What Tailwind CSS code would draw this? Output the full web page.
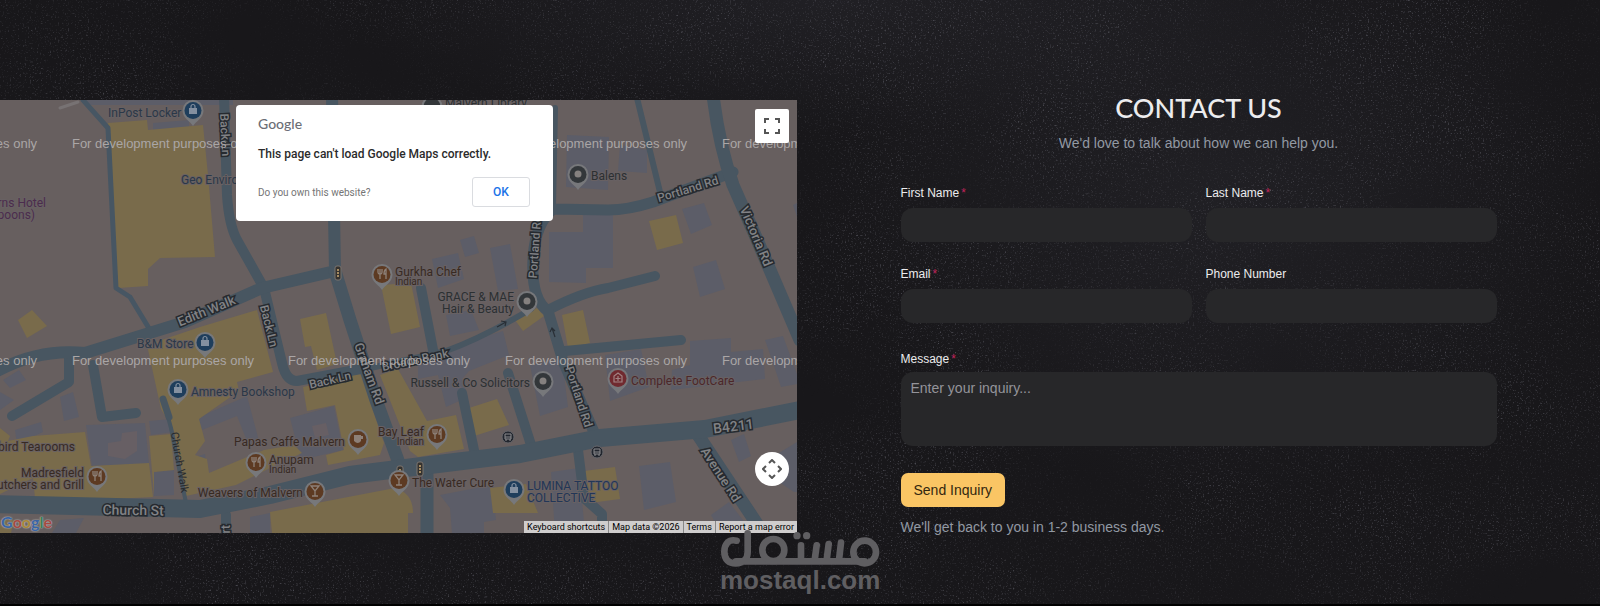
<!DOCTYPE html>
<html lang="en">
<head>
<meta charset="utf-8">
<meta name="viewport" content="width=device-width, initial-scale=1">
<title>Contact us</title>
<script src="https://cdn.jsdelivr.net/npm/@tailwindcss/browser@4"></script>
</head>
<body class="bg-black font-['Liberation_Sans',Arial,sans-serif]">
<main class="relative isolate min-h-[604px] overflow-hidden bg-[#18171a] pt-[100px] pb-[68px]">

  <!-- Chalkboard texture -->
  <svg class="absolute inset-0 -z-10 h-full w-full" aria-hidden="true">
    <defs>
      <filter id="dust" x="0" y="0" width="100%" height="100%" color-interpolation-filters="sRGB">
        <feTurbulence type="fractalNoise" baseFrequency="0.6" numOctaves="2" seed="4" result="n"/>
        <feColorMatrix in="n" type="matrix" values="0 0 0 0 0.55  0 0 0 0 0.55  0 0 0 0 0.6  1.5 0 0 0 -0.88" result="grain"/>
        <feTurbulence type="fractalNoise" baseFrequency="0.006 0.009" numOctaves="4" seed="23" result="c"/>
        <feColorMatrix in="c" type="matrix" values="0 0 0 0 1  0 0 0 0 1  0 0 0 0 1  2 0 0 0 -0.4" result="cloud"/>
        <feComposite in="grain" in2="cloud" operator="in"/>
      </filter>
      <radialGradient id="haze"><stop offset="0" stop-color="#34343c" stop-opacity=".3"/><stop offset="1" stop-color="#34343c" stop-opacity="0"/></radialGradient>
    </defs>
    <ellipse cx="52%" cy="0" rx="30%" ry="22%" fill="url(#haze)"/>
    <ellipse cx="76%" cy="32%" rx="24%" ry="50%" fill="url(#haze)"/>
    <rect width="100%" height="100%" filter="url(#dust)"/>
  </svg>

  <div class="grid grid-cols-[797fr_803fr]">
    <!-- Map -->
    <section class="relative h-[433px] overflow-hidden bg-[#675f5f]" aria-label="Map">
      <svg class="h-full w-full font-[Roboto,sans-serif]" viewBox="0 100 797 433" preserveAspectRatio="xMinYMin slice">
        <defs>
          <g id="pin"><path d="M0 15C-3 10-10.500 7-10.500-.5a10.500 10.500 0 0 1 21 0C10.500 7 3 10 0 15Z" fill="#77787b"/><circle r="8.500" cy="-.5"/></g>
          <g id="fork" fill="none" stroke="#8d8078" stroke-width="1.300"><path d="M-4-5v3q0 2 2 2t2-2v-3M-2-5v10M4 5v-10q-2 1-2 5h2"/></g>
          <g id="glass" fill="none" stroke="#8d8078" stroke-width="1.300"><path d="M-4-5H4L0 0ZM0 0v5M-3 5h6"/></g>
          <g id="bag"><path d="M-4-2h8v6h-8z" fill="#8490a0"/><path d="M-2-2v-1.500a2 2 0 0 1 4 0V-2" fill="none" stroke="#8490a0" stroke-width="1.200"/></g>
          <g id="signal"><rect x="-3" y="-7" width="6" height="14" rx="2" fill="#35322f" stroke="#7b746f"/><path d="M0-4v2M0-1v2M0 2v2" stroke="#a58b61" stroke-width="2"/></g>
          <g id="bus"><circle r="6" fill="#22262e" stroke="#66666b"/><path d="M-3-3h6v5h-6zM-3 0h6M-2 2v2M2 2v2" fill="none" stroke="#8b8b8e"/></g>
        </defs>

        <!-- Grey buildings -->
        <g fill="#5c5d68">
          <path d="M85 100h148v5H90zM153 123l36-3 0 8-36 3zM567 135l42 2-1 53-42-3zM620 145l27 5v23l-29-2zM549 232h34v-18h30v54h-27v15l-37-1zM682 209l22-6 8 22-21 9zM693 267l23-7 9 29-25 8zM793 205l4-2v14z"/>
          <path d="M460 240l14-4 5 17-14 4zM432 259l26-6 6 26-26 9zM490 248l20-4 8 45-20 2zM446 315l25-5 8 20-29 6zM418 365l22-6 30-18 33-10 6 24-40 16-7 8 6 18-22 10-8-32-20 4z"/>
          <path d="M3 380l16-10 7 10-16 8zM0 392l14 8-14 10zM60 397l13-5 6 25-15 4zM15 430l26-8 2 10-26 12zM86 425l59-2 4 41-57 2zM149 421l22-2 2 13-22 3zM154 472l20-2v25l-20 1zM197 418l50-22 12 45-10 5-12-30-35 14zM192 458l13-4 2 17-10 2z"/>
          <path d="M290 418l44-12 9 44-42 10zM530 365l32-6 6 48-28 9zM605 355l36-6 8 38-39 14zM690 341l41-3v14l32-3 2 30-94 11 1-20 18-5zM765 340l18-4 14 38v10l-16 3-10-30zM731 440l13-6 7 22-12 6zM797 442l-33 20v10l30 20h3zM639 466l31-4 6 40-32 8zM440 495l52-10 4 35-12 2v11h-32l-2-25zM551 472l28-4 6 65h-30zM711 515l18-13 24 31h-32zM60 520l24-2-8 15H52zM250 517l20-4v20h-20z"/>
        </g>
        <path d="M122 433l15-2v20l-12 8-17-3v-13l13-2zM312 426l14-3 3 12-14 3z" fill="#675f64"/>
        <!-- Yellow buildings -->
        <g fill="#796b4b">
          <path d="M108 123l39-3 1 10 55-5 5 50 7 82-55 1-12 11v17l-30 2zM18 320l14-10 15 16-20 12zM649 221l27-6 7 28-26 7z"/>
          <path d="M147 345l53-18 57-17 16 62-36 10 2 9-40 28 6 22-10 14 12 4 2 14 55-23 30-5 8 8-26 12-40 20-50 11-12-65-13-22zM0 428l10 8-2 5 25-5 52-4 6 34 58-3 4 34-60 3-58-2-2-20-33 16z"/>
          <path d="M149 436l22-2 3 36-20 2v23zM300 319l26-6 11 51-20 6-6-24-6 1zM303 387l57-14 24 70-4 12-52 10-2-10 18-5-9-45-28 6zM380 375l18-6 29 52 29-6 8 34-46 8-8-6zM381 285l30-2 9 44-29 7zM469 408l28-9 12 26-35 11zM270 512l125-24q18 5 18 25h-5v20H272zM490 488l36-4 12 29h-45zM584 471l31-4 5 32-30 4zM562 315l21-5 7 33-22 5zM515 320l22-12 7 8-21 15zM0 520h14l-3 13H0z"/>
        </g>

        <!-- Roads -->
        <g fill="none" stroke-linejoin="round" stroke-linecap="round">
          <path d="M83 100l25 28 8 160 14 9 20 33" stroke="#475663" stroke-width="5"/>
          <path d="M60 108l18-6" stroke="#777273" stroke-width="3"/>
          <g stroke="#485661">
            <path d="M555 108l-2 100M637 98l23 94" stroke-width="6"/>
            <path d="M163 399l8 29 15 75" stroke-width="4"/>
            <path d="M163 399l6 18" stroke-width="7"/>
            <path d="M366 369l80-18q38-14 85-42" stroke-width="6"/>
            <path d="M224 95l3 100q2 30 10 45l27 48 18 75q4 18 15 18l69-13M421 288l12 62M69 356v26l-57 34M93 365l9 52 34-4M462 393l13 62M508 373l24 75M226 515v25M578 450l6 48 18 16v25M565 351l116-11M548 310q35-18 60-22l47-12" stroke-width="10"/>
            <path d="M553 209l55 1q20 0 45-8l80-30M553 209q-18 15-20 50-2 40 15 52l15 50 34 78" stroke-width="11"/>
            <path d="M-8 374q44-26 93-21l100-31 77-34 73-17-3-176" stroke-width="12"/>
            <path d="M335 271l15 49 26 80 24 66M427 475v65M713 95q6 50 20 90l22 50 45 105M698 435l65 98" stroke-width="13"/>
            <path d="M-10 504l210 5 70-14 80-20 80-10 90-11 80-16 105-9 100-20" stroke-width="18" stroke-linecap="butt"/>
          </g>
        </g>
        <g stroke="#292f36" fill="none" stroke-width="1.200"><path d="M497 327l9-5m-5-1l5 1-1 4M555 337l-3-9m-2 4l2-4 3 3"/></g>
        <use href="#signal" x="338" y="273"/><use href="#signal" x="420" y="469"/><use href="#signal" x="400" y="473"/>
        <use href="#bus" x="508" y="437"/><use href="#bus" x="597" y="452"/>

        <!-- Street names -->
        <g font-size="13" font-weight="500" text-anchor="middle" fill="#818285" stroke="#262a2f" stroke-width="3" paint-order="stroke">
          <text transform="translate(208 315) rotate(-22)">Edith Walk</text>
          <text transform="translate(221 135) rotate(87)" font-size="12">Back Ln</text>
          <text transform="translate(265 327) rotate(76)" font-size="12">Back Ln</text>
          <text transform="translate(331 384) rotate(-13)" font-size="12">Back Ln</text>
          <text transform="translate(416 364) rotate(-12)" font-size="12">Broads Bank</text>
          <text transform="translate(365 375) rotate(70)">Graham Rd</text>
          <text transform="translate(539 247) rotate(-86)" font-size="12">Portland Rd</text>
          <text transform="translate(575 398) rotate(72)" font-size="12">Portland Rd</text>
          <text transform="translate(689 193) rotate(-17)" font-size="12">Portland Rd</text>
          <text transform="translate(752 238) rotate(67)">Victoria Rd</text>
          <text transform="translate(717 477) rotate(57)">Avenue Rd</text>
          <text transform="translate(734 431) rotate(-7)" font-size="14">B4211</text>
          <text transform="translate(133 515) rotate(1)" font-size="14">Church St</text>
          <text transform="translate(230 540) rotate(-90)" font-size="12">Court</text>
        </g>
        <text transform="translate(176 463) rotate(80)" text-anchor="middle" font-size="11" fill="#27292d">Church Walk</text>

        <!-- Places -->
        <g font-size="12" stroke="#686163" stroke-width="2" paint-order="stroke">
          <g fill="#2b3848"><text x="108" y="117">InPost Locker</text><text x="181" y="184">Geo Environmental</text><text x="137" y="348">B&amp;M Store</text><text x="191" y="396">Amnesty Bookshop</text></g>
          <g fill="#223657"><text x="527" y="490">LUMINA TATTOO</text><text x="527" y="502">COLLECTIVE</text></g>
          <g fill="#4b2c4d"><text x="46" y="207" text-anchor="end">Great Malverns Hotel</text><text x="35" y="219" text-anchor="end">(Wetherspoons)</text></g>
          <g fill="#2c3032"><text x="591" y="180">Balens</text><text x="514" y="301" text-anchor="end">GRACE &amp; MAE</text><text x="514" y="313" text-anchor="end">Hair &amp; Beauty</text><text x="530" y="387" text-anchor="end">Russell &amp; Co Solicitors</text><text x="445" y="107">Malvern Library</text></g>
          <g fill="#4c2729"><text x="631" y="385">Complete FootCare</text></g>
          <g fill="#382a22">
            <text x="395" y="276">Gurkha Chef</text><text x="395" y="285" font-size="10">Indian</text>
            <text x="424" y="436" text-anchor="end">Bay Leaf</text><text x="424" y="445" font-size="10" text-anchor="end">Indian</text>
            <text x="345" y="446" text-anchor="end">Papas Caffe Malvern</text>
            <text x="269" y="464">Anupam</text><text x="269" y="473" font-size="10">Indian</text>
            <text x="303" y="497" text-anchor="end">Weavers of Malvern</text><text x="412" y="487">The Water Cure</text>
            <text x="75" y="451" text-anchor="end">Bluebird Tearooms</text><text x="84" y="477" text-anchor="end">Madresfield</text><text x="84" y="489" text-anchor="end">Butchers and Grill</text>
          </g>
        </g>
        <g fill="#5d3a22">
          <use href="#pin" x="382" y="275"/><use href="#fork" x="382" y="274"/>
          <use href="#pin" x="437" y="435"/><use href="#fork" x="437" y="434"/>
          <use href="#pin" x="256" y="463"/><use href="#fork" x="256" y="462"/>
          <use href="#pin" x="97" y="477"/><use href="#fork" x="97" y="476"/>
          <use href="#pin" x="358" y="440"/><path d="M354 435h7v6q-3 4-7 0zM361 436h2v3h-2" fill="#8d8078"/>
          <use href="#pin" x="315" y="492"/><use href="#glass" x="315" y="491"/>
          <use href="#pin" x="399" y="481"/><use href="#glass" x="399" y="480"/>
        </g>
        <g fill="#1f3e5c">
          <use href="#pin" x="193" y="111"/><use href="#bag" x="193" y="110"/>
          <use href="#pin" x="205" y="343"/><use href="#bag" x="205" y="342"/>
          <use href="#pin" x="178" y="390"/><use href="#bag" x="178" y="389"/>
          <use href="#pin" x="514" y="490"/><use href="#bag" x="514" y="489"/>
        </g>
        <g fill="#33373a">
          <use href="#pin" x="578" y="175"/><use href="#pin" x="527" y="302"/><use href="#pin" x="543" y="382"/><use href="#pin" x="432" y="107"/>
          <g fill="#85817f"><circle cx="578" cy="174" r="3.500"/><circle cx="527" cy="301" r="3.500"/><circle cx="543" cy="381" r="3.500"/></g>
        </g>
        <g fill="#702a2f"><use href="#pin" x="618" y="379"/><path d="M614 382v-6l4-3 4 3v6zM618 376v5M615.500 378.500h5" fill="none" stroke="#a28383" stroke-width="1.200"/></g>

        <!-- Notice repeated over the tiles -->
        <g font-family="Liberation Sans" font-size="13" fill="#aaa6a6" text-anchor="middle">
          <text x="-54" y="148">For development purposes only</text><text x="163" y="148">For development purposes only</text><text x="379" y="148">For development purposes only</text><text x="596" y="148">For development purposes only</text><text x="813" y="148">For development purposes only</text>
          <text x="-54" y="365">For development purposes only</text><text x="163" y="365">For development purposes only</text><text x="379" y="365">For development purposes only</text><text x="596" y="365">For development purposes only</text><text x="813" y="365">For development purposes only</text>
        </g>
      </svg>

      <div role="dialog" aria-label="Google Maps error" class="absolute top-[5px] left-[236px] w-[317px] rounded bg-white pt-[9px] pr-[23px] pb-3.5 pl-[22px] font-[Roboto,sans-serif]">
        <p class="font-[Lato,sans-serif] text-sm leading-5 font-medium text-[#6b6e76]">Google</p>
        <p class="mt-3 text-xs leading-4 font-medium text-[#2b2b2b]">This page can't load Google Maps correctly.</p>
        <div class="mt-[15px] flex items-center justify-between">
          <a href="#" class="text-[10px] text-[#757575]">Do you own this website?</a>
          <button type="button" class="h-[30px] w-[58px] rounded-[3px] border border-[#dadce0] text-xs font-medium text-[#1a73e8]">OK</button>
        </div>
      </div>

      <button type="button" aria-label="Toggle fullscreen view" class="absolute top-[9px] right-2 grid h-[34px] w-[34px] place-items-center rounded-xs bg-white">
        <svg class="h-4 w-4" viewBox="0 0 16 16" fill="none" stroke="#555" stroke-width="2"><path d="M1 5V1h4M11 1h4v4M15 11v4h-4M5 15H1v-4"/></svg>
      </button>
      <button type="button" aria-label="Map camera controls" class="absolute right-2 bottom-[47px] grid h-[34px] w-[34px] place-items-center rounded-full bg-white">
        <svg class="h-5 w-5" viewBox="0 0 20 20" fill="none" stroke="#555" stroke-width="2"><path d="M7 4l3-3 3 3M7 16l3 3 3-3M4 7l-3 3 3 3M16 7l3 3-3 3"/></svg>
      </button>

      <a href="#" aria-label="Google" class="absolute bottom-px left-px flex font-[Lato,sans-serif] text-base leading-5 font-bold [text-shadow:0_0_1px_#aaa,0_0_1px_#aaa,0_0_2px_#aaa]"><span class="text-[#3a65a5]">G</span><span class="text-[#a54a42]">o</span><span class="text-[#a8873a]">o</span><span class="text-[#3a65a5]">g</span><span class="text-[#3f8056]">l</span><span class="text-[#a54a42]">e</span></a>
      <div class="absolute right-0 bottom-0 flex h-3 divide-x divide-[#888] bg-[#cfcdcd] font-[Roboto,sans-serif] text-[9px] leading-3 text-black">
        <button type="button" class="px-[3px]">Keyboard shortcuts</button><span class="px-[3px]">Map data ©2026</span><a href="#" class="px-[3px]">Terms</a><a href="#" class="px-[3px]">Report a map error</a>
      </div>
    </section>

    <!-- Enquiry form -->
    <section class="mx-auto w-full max-w-[596px]">
      <h1 class="text-center font-[Lato,sans-serif] text-[27px] leading-4 font-medium text-[#ececee]">CONTACT US</h1>
      <p class="mt-[18px] text-center text-sm leading-4.5 text-[#9299a3]">We'd love to talk about how we can help you.</p>
      <form class="mt-[33px]">
        <div class="grid grid-cols-2 gap-x-3.5 gap-y-6">
          <div><label for="first" class="block pb-[7px] text-xs leading-4 text-[#ececee]">First Name<span class="ml-0.5 text-[#c0245c]">*</span></label><input id="first" required class="block h-[34px] w-full rounded-xl bg-[#272729] px-2.5 text-sm text-white"></div>
          <div><label for="last" class="block pb-[7px] text-xs leading-4 text-[#ececee]">Last Name<span class="ml-0.5 text-[#c0245c]">*</span></label><input id="last" required class="block h-[34px] w-full rounded-xl bg-[#272729] px-2.5 text-sm text-white"></div>
          <div><label for="email" class="block pb-[7px] text-xs leading-4 text-[#ececee]">Email<span class="ml-0.5 text-[#c0245c]">*</span></label><input id="email" type="email" required class="block h-[34px] w-full rounded-xl bg-[#272729] px-2.5 text-sm text-white"></div>
          <div><label for="phone" class="block pb-[7px] text-xs leading-4 text-[#ececee]">Phone Number</label><input id="phone" type="tel" class="block h-[34px] w-full rounded-xl bg-[#272729] px-2.5 text-sm text-white"></div>
        </div>
        <label for="message" class="mt-7 block pb-[5px] text-xs leading-4 text-[#ececee]">Message<span class="ml-0.5 text-[#c0245c]">*</span></label>
        <textarea id="message" required placeholder="Enter your inquiry..." class="block h-[74px] w-full resize-none rounded-xl bg-[#272729] px-2.5 py-[7px] text-sm leading-4.5 text-white placeholder:text-[#94949a]"></textarea>
        <button type="submit" class="mt-[27px] block h-[34px] rounded-[7px] bg-[#fac564] px-[13px] text-sm text-[#33270f]">Send Inquiry</button>
        <p class="mt-[11px] text-sm leading-4.5 text-[#9299a3]">We'll get back to you in 1-2 business days.</p>
      </form>
    </section>
  </div>

  <!-- Watermark -->
  <div class="pointer-events-none absolute bottom-[15px] left-1/2 w-40 -translate-x-1/2 text-center text-[#5f5e61]">
    <svg class="block h-[38px] w-40" viewBox="12 20 480 114" fill="none" stroke="currentColor" stroke-width="20" stroke-linecap="round" stroke-linejoin="round" aria-hidden="true">
      <path d="M62 52C38 46 25 62 25 85c0 24 14 35 34 35 24 0 36-14 36-34V30M60 114H446M255 66v44M302 66l-6 44M338 62l-6 48M375 58l-6 52"/>
      <circle cx="172" cy="80" r="33"/><circle cx="446" cy="86" r="34"/>
      <path d="M243 37v.1M272 37v.1" stroke-width="22"/>
    </svg>
    <div class="mt-[3px] text-[26px] leading-4.5 font-bold">mostaql.com</div>
  </div>
</main>
</body>
</html>
